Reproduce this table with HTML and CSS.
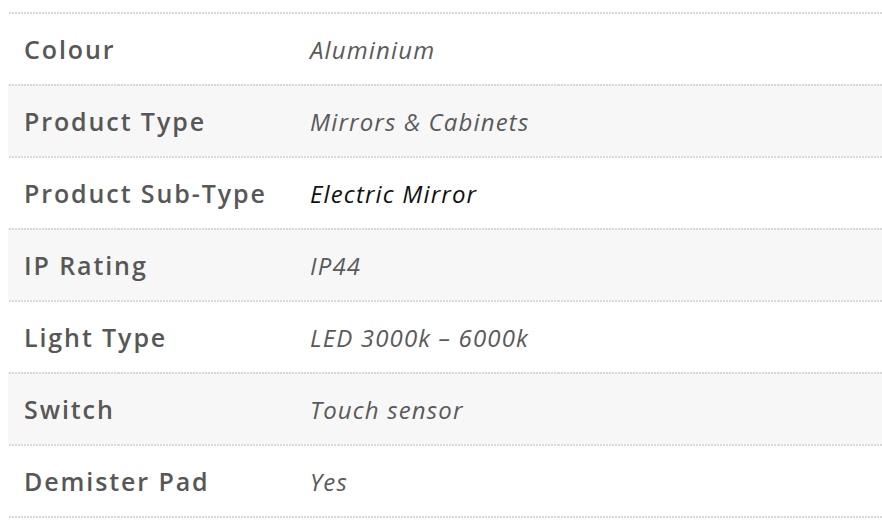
FILE: index.html
```html
<!DOCTYPE html>
<html lang="en">
<head>
<meta charset="utf-8">
<title>Specifications</title>
<link rel="stylesheet" href="styles.css">
</head>
<body>
<div class="specs">
  <div class="row"><div class="label">Colour</div><div class="value">Aluminium</div></div>
  <div class="row alt"><div class="label">Product Type</div><div class="value">Mirrors &amp; Cabinets</div></div>
  <div class="row"><div class="label">Product Sub-Type</div><div class="value link">Electric Mirror</div></div>
  <div class="row alt"><div class="label">IP Rating</div><div class="value">IP44</div></div>
  <div class="row"><div class="label">Light Type</div><div class="value">LED 3000k – 6000k</div></div>
  <div class="row alt"><div class="label">Switch</div><div class="value">Touch sensor</div></div>
  <div class="row last"><div class="label">Demister Pad</div><div class="value">Yes</div></div>
</div>
</body>
</html>
```

FILE: styles.css
```css
html, body {
  margin: 0;
  padding: 0;
  background: #ffffff;
}

body {
  padding: 12px 0 0 8px;
  font-family: "Open Sans", "Lato", sans-serif;
  overflow: hidden;
}

.specs {
  width: 880px;
}

.row {
  display: grid;
  grid-template-columns: 302px 1fr;
  align-items: center;
  height: 70px;
  border-top: 2px solid;
  border-image: repeating-linear-gradient(to right, #d9d9d9 0 2px, transparent 2px 3px) 2;
  background: #ffffff;
}

.row.alt {
  background: #f7f7f7;
}

.row.last {
  border-bottom: 2px solid;
}

.label {
  padding-left: 16px;
  font-size: 25px;
  font-weight: 600;
  letter-spacing: 1.9px;
  color: #575757;
}

.value {
  font-size: 24px;
  font-style: italic;
  color: #5a5a5a;
  letter-spacing: 1.15px;
}

.value.link {
  color: #111111;
}
```
